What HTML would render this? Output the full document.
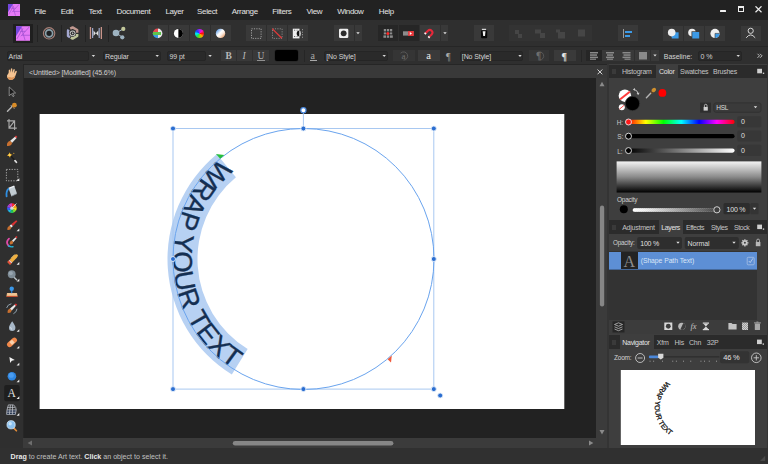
<!DOCTYPE html>
<html><head><meta charset="utf-8">
<style>
*{margin:0;padding:0;box-sizing:border-box}
html,body{width:768px;height:464px;overflow:hidden;background:#222222;font-family:"Liberation Sans",sans-serif}
.a{position:absolute}
.t{position:absolute;white-space:nowrap;font-family:"Liberation Sans",sans-serif;line-height:1}
.mn{font-size:8px;color:#e4e4e4;letter-spacing:-0.35px;top:8px}
.pt{font-size:7px;color:#c4c4c4;letter-spacing:-0.25px}
.btn{position:absolute;background:#393939}
.sep{position:absolute;width:1px;background:#232323}
.box{position:absolute;background:#262626;border-radius:2px}
</style></head><body>
<!-- menu bar -->
<div class="a" style="left:0;top:0;width:768px;height:20px;background:#222222"></div>
<!-- toolbar -->
<div class="a" style="left:0;top:19.7px;width:768px;height:26.3px;background:#2f2f2f"></div>
<div class="a" style="left:0;top:46px;width:768px;height:1px;background:#262626"></div>
<!-- context bar -->
<div class="a" style="left:0;top:47px;width:768px;height:17px;background:#2f2f2f"></div>
<div class="a" style="left:0;top:63.5px;width:768px;height:1px;background:#262626"></div>
<!-- left tools -->
<div class="a" style="left:0;top:64px;width:23px;height:384px;background:#2f2f2f"></div>
<div class="a" style="left:23px;top:64px;width:1px;height:384px;background:#262626"></div>
<!-- doc tab -->
<div class="a" style="left:24px;top:65px;width:583px;height:13px;background:#393939"></div>
<!-- canvas -->
<div class="a" style="left:24px;top:78px;width:572px;height:359.7px;background:#222222"></div>
<!-- scrollbars -->
<div class="a" style="left:596px;top:78px;width:11.3px;height:370px;background:#3b3b3b"></div>
<div class="a" style="left:23px;top:437.7px;width:574px;height:10.3px;background:#3b3b3b"></div>
<div class="a" style="left:607.3px;top:64px;width:1.6px;height:384px;background:#343434"></div>
<!-- right panel -->
<div class="a" style="left:609px;top:64px;width:159px;height:384px;background:#3e3e3e"></div>
<div class="a" style="left:766.8px;top:64px;width:1.2px;height:384px;background:#343434"></div>
<!-- status bg -->
<div class="a" style="left:0;top:448px;width:768px;height:16px;background:#303030"></div>
<!-- canvas drawing -->
<svg class="a" style="left:0;top:0" width="768" height="464" viewBox="0 0 768 464">
<rect x="39.6" y="114" width="524.7" height="295" fill="#ffffff"/>
<path d="M 216.81 154.21 A 136 136 0 0 0 231.83 374.59 L 247.64 349.09 A 106 106 0 0 1 235.93 177.33 Z" fill="#b7d1f3"/>
<path id="cp" d="M 303.5 128.5 A 130.5 130.5 0 0 0 303.5 389.5 A 130.5 130.5 0 0 0 303.5 128.5" fill="none" stroke="none"/>
<text font-family="Liberation Sans" font-size="27.4" fill="#142f52" stroke="#142f52" stroke-width="0.35"><textPath href="#cp" startOffset="90.2">WRAP YOUR TEXT</textPath></text>
<rect x="173" y="128.5" width="260.8" height="260.6" fill="none" stroke="#a8c8f1" stroke-width="1"/>
<circle cx="303.5" cy="259" r="130.5" fill="none" stroke="#6aa4ee" stroke-width="1"/>
<line x1="303.4" y1="112.5" x2="303.4" y2="128.5" stroke="#a8c8f1" stroke-width="1"/>
<circle cx="303.4" cy="110.3" r="2.6" fill="#ffffff" stroke="#4a88dc" stroke-width="1.2"/>
<g fill="#2a6dd0" stroke="#e4eefa" stroke-width="0.9">
<circle cx="173" cy="128.5" r="2.5"/><circle cx="303.4" cy="128.5" r="2.5"/><circle cx="433.8" cy="128.5" r="2.5"/>
<circle cx="173" cy="259" r="2.5"/><circle cx="433.8" cy="259" r="2.5"/>
<circle cx="173" cy="389.1" r="2.5"/><circle cx="303.4" cy="389.1" r="2.5"/><circle cx="433.8" cy="389.1" r="2.5"/>
<circle cx="440.2" cy="395.5" r="2.5"/>
</g>
<path d="M 216 154 L 224.3 155 L 220.2 158.8 Z" fill="#26bf3c"/>
<path d="M 391.8 355.6 L 387.6 359.2 L 391 362.6 Z" fill="#f05a3c"/>
</svg>
<!-- MENU -->
<svg class="a" style="left:8px;top:3.6px" width="12" height="12" viewBox="0 0 15 15"><rect width="15" height="15" fill="#e67af6"/><polygon points="0,0 6.4,0 0,10.4" fill="#7447dc"/>
<g stroke="#9e4ed0" stroke-width="0.75" fill="none"><path d="M0.9 13.1 L7.1 2.3 M5.4 1.2 L9.4 14.6 M14 0.4 L5 10.3 M6.3 9.3 L15 9.3 M4 5.3 L9.6 5.3"/></g></svg>
<div class="t mn" style="left:34.4px">File</div>
<div class="t mn" style="left:60.7px">Edit</div>
<div class="t mn" style="left:88.4px">Text</div>
<div class="t mn" style="left:116.6px">Document</div>
<div class="t mn" style="left:165.4px">Layer</div>
<div class="t mn" style="left:197.1px">Select</div>
<div class="t mn" style="left:231.8px">Arrange</div>
<div class="t mn" style="left:272.2px">Filters</div>
<div class="t mn" style="left:306.5px">View</div>
<div class="t mn" style="left:337.2px">Window</div>
<div class="t mn" style="left:378.8px">Help</div>
<div class="a" style="left:720.4px;top:10px;width:5.8px;height:2px;background:#f0f0f0;border-radius:0.5px"></div>
<div class="a" style="left:737.8px;top:6.4px;width:6px;height:5.8px;border:1px solid #eeeeee;border-top-width:2px"></div>
<svg class="a" style="left:755px;top:6px" width="7" height="6.5" viewBox="0 0 7 6.5"><path d="M0.5 0.3 L6.5 6.2 M6.5 0.3 L0.5 6.2" stroke="#eeeeee" stroke-width="1.2"/></svg>
<!-- TOOLBAR -->
<div class="a" style="left:13px;top:23.5px;width:20px;height:19px;background:#1f1f1f"></div>
<svg class="a" style="left:15.6px;top:25.9px" width="14.6" height="15" viewBox="0 0 15 15"><rect width="15" height="15" fill="#e67af6"/><polygon points="0,0 6.4,0 0,10.4" fill="#7447dc"/>
<g stroke="#9e4ed0" stroke-width="0.75" fill="none"><path d="M0.9 13.1 L7.1 2.3 M5.4 1.2 L9.4 14.6 M14 0.4 L5 10.3 M6.3 9.3 L15 9.3 M4 5.3 L9.6 5.3"/></g></svg>
<div class="sep" style="left:36.5px;top:25px;height:17px"></div>
<div class="sep" style="left:61px;top:25px;height:17px"></div>
<div class="sep" style="left:84.8px;top:25px;height:17px"></div>
<div class="sep" style="left:108.4px;top:25px;height:17px"></div>
<svg class="a" style="left:0;top:20px" width="140" height="26" viewBox="0 20 140 26">
<circle cx="49.1" cy="33.3" r="5.7" fill="none" stroke="#a88078" stroke-width="1.1"/>
<circle cx="49.1" cy="33.3" r="3.5" fill="#1e2022" stroke="#8aa0aa" stroke-width="1.7"/>
<path d="M70.2 28.6 L72.6 27.4 L77.2 30 L77.2 32.8" fill="none" stroke="#c09890" stroke-width="2.4" stroke-linejoin="round"/>
<path d="M68.6 29.6 L68 30.8 L68 36 L70 37.2" fill="none" stroke="#a4a8d0" stroke-width="2.4" stroke-linejoin="round"/>
<path d="M77.2 34 L77.2 36 L72.6 38.6 L70.8 37.6" fill="none" stroke="#bec49a" stroke-width="2.4" stroke-linejoin="round"/>
<circle cx="72.6" cy="33.3" r="2.9" fill="#c4c4c4"/><circle cx="72.6" cy="33.3" r="1.9" fill="#2c2c2c"/><path d="M72 32.2 L73.9 33.3 L72 34.4Z" fill="#bbbbbb"/>
<rect x="89.8" y="27" width="1.3" height="12" fill="#c8948a"/><rect x="100.7" y="27" width="1.3" height="12" fill="#c8948a"/>
<rect x="92" y="28" width="1.2" height="10" fill="#9ba6c8"/><rect x="98.6" y="28" width="1.2" height="10" fill="#9ba6c8"/>
<path d="M93.5 30.5 L95.9 33.3 L93.5 36 Z M98.3 30.5 L95.9 33.3 L98.3 36 Z" fill="#dedede"/>
<path d="M116 33 L123.3 28.9 M116 33 L122.3 37.1" stroke="#a7b7c4" stroke-width="1"/>
<circle cx="116" cy="33" r="3.3" fill="#9db2c0"/><circle cx="123.3" cy="28.9" r="2.1" fill="#c2c79a"/><circle cx="122.3" cy="37.3" r="2.1" fill="#9db2c0"/>
</svg>
<!-- colour group -->
<div class="btn" style="left:147.6px;top:25.2px;width:83.2px;height:15.6px"></div>
<div class="sep" style="left:168px;top:25.2px;height:15.6px;background:#2e2e2e"></div>
<div class="sep" style="left:189px;top:25.2px;height:15.6px;background:#2e2e2e"></div>
<div class="sep" style="left:210px;top:25.2px;height:15.6px;background:#2e2e2e"></div>
<svg class="a" style="left:140px;top:20px" width="100" height="26" viewBox="140 20 100 26">
<clipPath id="c1"><circle cx="157.6" cy="33.4" r="4.8"/></clipPath>
<g clip-path="url(#c1)"><rect x="152" y="28" width="6" height="5" fill="#e8484f"/><rect x="158" y="28" width="6" height="11" fill="#e6e6e6"/><rect x="152" y="33" width="6" height="6" fill="#3b9ae0"/><rect x="152" y="32" width="9" height="3" fill="#5ec34b"/></g>
<circle cx="178.4" cy="33.4" r="4.9" fill="#2a2a2a"/><circle cx="178.4" cy="33.4" r="4.5" fill="#ffffff"/><path d="M178.4 28.9 A4.5 4.5 0 0 1 178.4 37.9 Z" fill="#000000"/>
<defs><linearGradient id="g4" x1="0" y1="0" x2="1" y2="1"><stop offset="0.05" stop-color="#3a86e0"/><stop offset="0.45" stop-color="#ffffff"/><stop offset="0.6" stop-color="#fbf0e8"/><stop offset="1" stop-color="#e07e3a"/></linearGradient></defs>
<circle cx="220.5" cy="33.4" r="4.7" fill="url(#g4)"/>
</svg>
<div class="a" style="left:194.8px;top:28.7px;width:9.4px;height:9.4px;border-radius:50%;background:conic-gradient(from 0deg,#a020ff,#ff10c0 45deg,#ff1010 90deg,#ffb000 140deg,#60e010 190deg,#10e080 230deg,#00f0f0 265deg,#1040ff 310deg,#a020ff)"></div>
<!-- geometry group -->
<div class="btn" style="left:246px;top:25.3px;width:62.3px;height:15.9px"></div>
<div class="sep" style="left:266px;top:25.3px;height:15.9px;background:#2e2e2e"></div>
<div class="sep" style="left:287px;top:25.3px;height:15.9px;background:#2e2e2e"></div>
<div class="btn" style="left:333.5px;top:25.3px;width:28.3px;height:15.9px"></div>
<div class="sep" style="left:354px;top:25.3px;height:15.9px;background:#2e2e2e"></div>
<svg class="a" style="left:240px;top:20px" width="130" height="26" viewBox="240 20 130 26">
<rect x="251.5" y="28.8" width="9.6" height="9.6" fill="none" stroke="#a8a8a8" stroke-width="0.9" stroke-dasharray="1.2 1.2"/>
<rect x="272.5" y="28.8" width="9.6" height="9.6" fill="none" stroke="#8a8a8a" stroke-width="0.9" stroke-dasharray="1.2 1.2"/>
<path d="M272.2 28.6 L281.8 38.2" stroke="#e23a3a" stroke-width="1.3"/>
<rect x="292.8" y="28.7" width="6.7" height="9.7" fill="#eeeeee"/>
<g fill="#6a6a6a"><rect x="294" y="29.7" width="1.2" height="1"/><rect x="294" y="36" width="1.2" height="1"/><rect x="296.6" y="29.7" width="1" height="1"/><rect x="296.6" y="36" width="1" height="1"/></g>
<path d="M299.6 30.6 A2.9 2.9 0 0 0 299.6 36.4 Z" fill="#111"/><path d="M299.4 30.6 A1.4 2.9 0 0 1 299.4 36.4 Z" fill="#e8e8e8"/>
<g fill="#a0a0a0"><rect x="302" y="29.2" width="1" height="1"/><rect x="302" y="31.7" width="1" height="1"/><rect x="302" y="34.2" width="1" height="1"/><rect x="302" y="36.7" width="1" height="1"/></g>
<rect x="339" y="28.7" width="9.3" height="9.3" rx="1.2" fill="#eeeeee"/><circle cx="343.65" cy="33.35" r="2.9" fill="#2a2a2a"/>
<path d="M356.3 32.3 L359.7 32.3 L358 34.3 Z" fill="#e0e0e0"/>
</svg>
<!-- snapping group -->
<div class="btn" style="left:378px;top:25.3px;width:20px;height:15.9px;background:#262626"></div>
<div class="btn" style="left:398.5px;top:25.3px;width:20.4px;height:15.9px;background:#262626"></div>
<div class="btn" style="left:419.5px;top:25.3px;width:20.7px;height:15.9px;background:#3a3a3a"></div>
<div class="btn" style="left:441px;top:25.3px;width:7.3px;height:15.9px"></div>
<div class="btn" style="left:474.2px;top:25.3px;width:19.8px;height:15.9px"></div>
<svg class="a" style="left:370px;top:20px" width="130" height="26" viewBox="370 20 130 26">
<g fill="#8c8c8c"><rect x="383.8" y="29" width="2.4" height="2.4"/><rect x="387" y="29" width="2" height="2.4"/><rect x="389.8" y="29" width="2.4" height="2.4"/>
<rect x="383.8" y="32.4" width="2.4" height="2"/><rect x="389.8" y="32.4" width="2.4" height="2"/>
<rect x="383.4" y="35.4" width="2.8" height="2.4"/><rect x="387" y="35.4" width="2" height="2.4"/><rect x="389.8" y="35.4" width="3" height="2.4"/></g>
<circle cx="387.9" cy="33.4" r="1.5" fill="#ff2a2a"/>
<rect x="403" y="31.3" width="10.6" height="4.3" fill="#8c8c8c"/><rect x="408.2" y="31" width="5.6" height="5" fill="#e8363a"/><path d="M409.8 32 L412 33.5 L409.8 35Z" fill="#fff"/>
<g transform="translate(429.8 32.6) rotate(45)"><path d="M-2.6 4.2 V0 A2.6 2.6 0 0 1 2.6 0 V4.2" fill="none" stroke="#e8283a" stroke-width="2"/><path d="M-2.6 3 V4.6 M2.6 3 V4.6" stroke="#f4f4f4" stroke-width="2"/></g>
<path d="M443.3 32.3 L446.7 32.3 L445 34.3 Z" fill="#e0e0e0"/>
<rect x="481.9" y="28.8" width="4.2" height="1.1" fill="#e8e8e8"/><path d="M481 30.6 H487.2 V37 Q487.2 38.2 486 38.2 H482.2 Q481 38.2 481 37 Z" fill="#080808"/><path d="M482.7 31.2 H485.5 L485 36 H483.2 Z" fill="#f4f4f4"/>
</svg>
<!-- arrange group (disabled) -->
<div class="btn" style="left:509px;top:25.3px;width:19.7px;height:15.9px;background:#333333"></div>
<div class="btn" style="left:529.2px;top:25.3px;width:20.5px;height:15.9px;background:#333333"></div>
<div class="btn" style="left:550.2px;top:25.3px;width:20.7px;height:15.9px;background:#333333"></div>
<div class="btn" style="left:571.3px;top:25.3px;width:20.7px;height:15.9px;background:#333333"></div>
<svg class="a" style="left:500px;top:20px" width="100" height="26" viewBox="500 20 100 26">
<g fill="#464646"><rect x="515" y="30" width="4" height="4"/><rect x="518" y="34" width="4" height="4"/>
<rect x="535" y="29.5" width="6" height="4"/><rect x="540" y="33" width="5" height="5"/>
<rect x="556" y="29.5" width="4" height="3"/><rect x="558" y="32" width="7" height="6.5"/>
<rect x="578" y="29.5" width="7" height="7"/></g>
</svg>
<div class="btn" style="left:617.5px;top:25.3px;width:20.2px;height:15.9px"></div>
<div class="a" style="left:623.2px;top:28.8px;width:1px;height:9.6px;background:#9a9a9a"></div>
<div class="a" style="left:624.8px;top:30.6px;width:7.2px;height:2.2px;background:#3d9ae6"></div>
<div class="a" style="left:624.8px;top:34.6px;width:5px;height:2.2px;background:#3d9ae6"></div>
<!-- boolean group -->
<div class="btn" style="left:663.3px;top:25.5px;width:19.5px;height:15.2px"></div>
<div class="btn" style="left:683.5px;top:25.5px;width:20.4px;height:15.2px"></div>
<div class="btn" style="left:704.5px;top:25.5px;width:20.4px;height:15.2px"></div>
<div class="btn" style="left:740.7px;top:25.5px;width:20.1px;height:15.2px"></div>
<svg class="a" style="left:660px;top:20px" width="108" height="26" viewBox="660 20 108 26">
<rect x="671.7" y="32.3" width="6.9" height="6.2" fill="#3d9ae6"/><circle cx="671.7" cy="32.6" r="3.8" fill="#eeeeee"/>
<circle cx="692" cy="32.6" r="3.8" fill="#eeeeee"/><rect x="691.5" y="31.3" width="8" height="7.5" fill="#383838"/><rect x="692.3" y="32" width="6.9" height="6.5" fill="#3d9ae6"/>
<circle cx="715" cy="33.4" r="4.6" fill="#eeeeee"/><path d="M715 33.4 H719.6 A4.6 4.6 0 0 1 715 38 Z" fill="#3d9ae6"/><path d="M715 33.4 H719.6 M715 33.4 V38" stroke="#383838" stroke-width="0.6"/>
<circle cx="750.7" cy="30.8" r="2.6" fill="none" stroke="#d8d8d8" stroke-width="1"/><path d="M746.2 37.8 Q750.7 32 755.2 37.8" fill="none" stroke="#d8d8d8" stroke-width="1"/>
</svg>
<!-- CONTEXT BAR -->
<div class="box" style="left:6.8px;top:51.2px;width:82.5px;height:10px;background:#2a2a2a;border:1px solid #252525"></div>
<div class="box" style="left:89.3px;top:51.2px;width:8.2px;height:10px;background:#303030;border-radius:0 2px 2px 0"></div>
<div class="t" style="left:8.6px;top:52.9px;font-size:7px;color:#d4d4d4;letter-spacing:-0.05px">Arial</div>
<div class="box" style="left:103.3px;top:51.2px;width:57.4px;height:10px;background:#2a2a2a;border:1px solid #252525"></div>
<div class="t" style="left:105px;top:52.9px;font-size:7px;color:#d4d4d4;letter-spacing:-0.1px">Regular</div>
<div class="box" style="left:167.4px;top:51.2px;width:38.3px;height:10px;background:#2a2a2a;border:1px solid #252525"></div>
<div class="box" style="left:206px;top:51.2px;width:8.2px;height:10px;background:#303030;border-radius:0 2px 2px 0"></div>
<div class="t" style="left:169.5px;top:52.9px;font-size:7px;color:#d4d4d4;letter-spacing:-0.1px">99 pt</div>
<div class="btn" style="left:221.2px;top:50.2px;width:15px;height:11.2px"></div>
<div class="btn" style="left:236.9px;top:50.2px;width:15.4px;height:11.2px"></div>
<div class="btn" style="left:252.8px;top:50.2px;width:15.8px;height:11.2px"></div>
<div class="t" style="left:225.6px;top:51.8px;font-family:'Liberation Serif';font-size:9.5px;font-weight:bold;color:#b8b8b8">B</div>
<div class="t" style="left:242.6px;top:51.8px;font-family:'Liberation Serif';font-size:9.5px;font-style:italic;color:#b8b8b8">I</div>
<div class="t" style="left:257.4px;top:51.8px;font-family:'Liberation Serif';font-size:9.5px;color:#b8b8b8">U</div>
<div class="a" style="left:257.2px;top:59.6px;width:7.4px;height:0.9px;background:#909090"></div>
<div class="a" style="left:275px;top:50.3px;width:23px;height:10.9px;background:#000;border-radius:2px;box-shadow:0 0 0 0.5px #222"></div>
<div class="sep" style="left:303.5px;top:50px;height:12px;background:#262626"></div>
<div class="t" style="left:310.5px;top:50.5px;font-family:'Liberation Serif';font-size:10px;color:#a8a8a8">a</div>
<div class="a" style="left:309.5px;top:60px;width:7px;height:0.8px;background:#a8a8a8"></div>
<div class="box" style="left:324px;top:51.2px;width:64px;height:10px;background:#2a2a2a;border:1px solid #252525"></div>
<div class="t" style="left:326.2px;top:52.9px;font-size:7px;color:#d4d4d4;letter-spacing:-0.1px">[No Style]</div>
<div class="btn" style="left:392.9px;top:50.2px;width:21.7px;height:11px;background:#353535"></div>
<div class="t" style="left:401.5px;top:51.5px;font-family:'Liberation Serif';font-size:9px;color:#707070">a</div>
<svg class="a" style="left:398px;top:50px" width="12" height="12" viewBox="0 0 12 12"><path d="M2.6 3.2 A4.1 4.1 0 1 1 5.5 10.1" fill="none" stroke="#606060" stroke-width="0.8"/></svg>
<div class="btn" style="left:418.1px;top:50.2px;width:21.9px;height:11px;background:#3a3a3a"></div>
<div class="t" style="left:426.2px;top:51.3px;font-family:'Liberation Serif';font-size:10.5px;color:#ececec">a</div>
<div class="t" style="left:446px;top:51.5px;font-family:'Liberation Serif';font-size:10px;color:#a8a8a8">&#182;</div>
<div class="box" style="left:459.6px;top:51.2px;width:63.5px;height:10px;background:#2a2a2a;border:1px solid #252525"></div>
<div class="t" style="left:461.8px;top:52.9px;font-size:7px;color:#d4d4d4;letter-spacing:-0.1px">[No Style]</div>
<div class="btn" style="left:529px;top:50.2px;width:20.2px;height:11px;background:#353535"></div>
<svg class="a" style="left:534px;top:50px" width="12" height="12" viewBox="0 0 12 12"><path d="M2.6 3.2 A4.1 4.1 0 1 1 5.5 10.1" fill="none" stroke="#606060" stroke-width="0.8"/></svg>
<div class="t" style="left:536px;top:51.5px;font-family:'Liberation Serif';font-size:9.5px;font-weight:bold;color:#6e6e6e">&#182;</div>
<div class="btn" style="left:554.3px;top:50.2px;width:21.3px;height:11px;background:#3a3a3a"></div>
<div class="t" style="left:561.6px;top:51.5px;font-family:'Liberation Serif';font-size:10px;font-weight:bold;color:#e8e8e8">&#182;</div>
<div class="sep" style="left:580.7px;top:50px;height:12px;background:#262626"></div>
<div class="btn" style="left:586.4px;top:50.3px;width:15.3px;height:10.4px;background:#262626"></div>
<div class="btn" style="left:602.2px;top:50.3px;width:16.4px;height:10.4px"></div>
<div class="btn" style="left:619px;top:50.3px;width:15px;height:10.4px"></div>
<div class="btn" style="left:634.5px;top:50.3px;width:15.8px;height:10.4px"></div>
<div class="btn" style="left:650.7px;top:50.3px;width:8px;height:10.4px"></div>
<svg class="a" style="left:580px;top:48px" width="190" height="16" viewBox="580 48 190 16">
<g fill="#8a8a8a">
<rect x="590" y="52" width="8" height="1.5"/><rect x="590" y="54.3" width="7" height="1.5"/><rect x="590" y="56.6" width="8" height="1.5"/><rect x="590" y="58.6" width="6" height="1.2"/>
<rect x="606" y="52" width="8" height="1.5"/><rect x="607" y="54.3" width="6" height="1.5"/><rect x="606" y="56.6" width="8" height="1.5"/><rect x="607" y="58.6" width="6" height="1.2"/>
<rect x="622.5" y="52" width="8" height="1.5"/><rect x="623.5" y="54.3" width="7" height="1.5"/><rect x="622.5" y="56.6" width="8" height="1.5"/><rect x="624.5" y="58.6" width="6" height="1.2"/>
<rect x="639" y="52" width="8" height="7.5"/>
</g>
<path d="M653.3 54.5 L656.7 54.5 L655 56.5 Z" fill="#d8d8d8"/>
<path d="M94.3 0 Z" fill="none"/>
</svg>
<svg class="a" style="left:0;top:48px" width="768" height="16" viewBox="0 48 768 16">
<g fill="#d8d8d8">
<path d="M91.7 55 L95.1 55 L93.4 57 Z"/><path d="M155.5 55 L158.9 55 L157.2 57 Z"/><path d="M208.4 55 L211.8 55 L210.1 57 Z"/>
<path d="M382.5 55 L385.9 55 L384.2 57 Z"/><path d="M518.3 55 L521.7 55 L520 57 Z"/><path d="M736.5 55 L739.9 55 L738.2 57 Z"/>
</g>
<path d="M757.5 53.8 L759.5 55.8 L757.5 57.8 M760 53.8 L762 55.8 L760 57.8" fill="none" stroke="#cfcfcf" stroke-width="0.9"/>
</svg>
<div class="t" style="left:663.8px;top:52.9px;font-size:7px;color:#d4d4d4;letter-spacing:-0.05px">Baseline:</div>
<div class="box" style="left:697.5px;top:50.7px;width:44.2px;height:10.5px;background:#2a2a2a;border:1px solid #252525"></div>
<div class="t" style="left:700.5px;top:52.9px;font-size:7px;color:#d4d4d4;letter-spacing:-0.1px">0 %</div>
<svg class="a" style="left:734px;top:53px" width="8" height="6" viewBox="0 0 8 6"><path d="M2.5 2 L5.9 2 L4.2 4 Z" fill="#d8d8d8"/></svg>
<!-- TOOLS -->
<svg class="a" style="left:0;top:0" width="24" height="448" viewBox="0 0 24 448">
<g transform="translate(0 74.00)"><path d="M7 1.5 L8.6 -1 L8.8 -4 Q9.4 -5 10 -4 L10.3 -1.3 L10.9 -5.2 Q11.6 -6.2 12.3 -5.2 L12.3 -1.2 L13.4 -4.6 Q14.1 -5.4 14.8 -4.5 L14.1 -0.6 L15.6 -3 Q16.4 -3.4 16.9 -2.6 L15.4 1.8 Q14.4 5.8 11.3 6 Q8.6 6 7.2 3.5 Z" fill="#f5c391"/><path d="M10 3 Q13 4.5 15.3 1.8 Q14.4 5.8 11.3 6 Q8.6 6 7.2 3.5 Z" fill="#dc9458"/></g>
<g transform="translate(0 90.77)"><path d="M9.2 -3.8 L15.6 2.2 L12.6 2.4 L14.2 5.2 L13 5.9 L11.4 3 L9.2 5 Z" fill="#1a1a1a" stroke="#a0a0a0" stroke-width="0.8" stroke-linejoin="round"/></g>
<g transform="translate(0 107.54)"><path d="M7.5 3.7 L12.2 -1" stroke="#b4b4b4" stroke-width="1.5" stroke-linecap="round"/><path d="M11 -2.2 L14.2 1" stroke="#d8d8d8" stroke-width="1"/><circle cx="14.4" cy="-2.4" r="2.4" fill="#d88c28"/><path d="M12.2 -0.6 L13.4 0.6" stroke="#6d4210" stroke-width="1.2"/></g>
<g transform="translate(0 124.31)"><path d="M9 -5.2 V3.8 H16.8 M7 -3.4 H14.6 V5.6 M9.2 3.6 L14.4 -3.2" fill="none" stroke="#ababab" stroke-width="1.1"/></g>
<g transform="translate(0 141.08)"><path d="M7 4.8 Q6.4 0.8 10.2 -0.4 L12.2 1.6 Q11.2 5.4 7 4.8 Z" fill="#c87030"/><path d="M10.2 -0.4 L15.2 -4.6 L16.6 -3.2 L12.2 1.6 Z" fill="#e8e8e8"/><path d="M14.8 -4.4 L16 -5.6 L17.4 -4.2 L16.2 -3 Z" fill="#e23a3a"/></g>
<g transform="translate(0 157.85)"><path d="M10.6 -2.2 L15.6 3.4" stroke="#1c1c1c" stroke-width="1.5"/><path d="M15 2.8 L16.4 4.4" stroke="#dcdcdc" stroke-width="1.8" stroke-linecap="round"/><path d="M9.6 -5.6 L10.5 -3.6 L12.6 -3 L10.6 -2 L10 0 L9 -1.8 L6.8 -2.4 L8.6 -3.4 Z" fill="#f2a81c"/><circle cx="9.6" cy="-2.8" r="1.2" fill="#ffd860"/><circle cx="13.8" cy="-4.6" r="0.6" fill="#f0b030"/></g>
<g transform="translate(0 174.62)"><rect x="6.4" y="-5.2" width="11.4" height="11.4" fill="none" stroke="#b0b0b0" stroke-width="0.9" stroke-dasharray="1.3 1.3"/></g>
<g transform="translate(0 174.62)"><path d="M19.3 3.6 L19.3 6.3 L16.6 6.3 Z" fill="#ececec"/></g>
<g transform="translate(0 191.39)"><path d="M8.6 -3 L14.4 -5.2 L17 2.2 L11.4 4.8 Z" fill="#c2ccd2"/><path d="M8.6 -3 L14.4 -5.2" stroke="#eef2f6" stroke-width="1.4"/><path d="M11.4 4.8 L17 2.2" stroke="#8a969e" stroke-width="0.8"/><path d="M8.4 -2.4 Q6 -0.5 6.6 5" fill="none" stroke="#2f8ee0" stroke-width="1.8" stroke-linecap="round"/></g>
<g transform="translate(0 208.16)"><path d="M11.9 0 L11.90 -4.80 A4.8 4.8 0 0 1 15.05 -3.62 Z" fill="#ff3030"/><path d="M11.9 0 L14.99 -3.68 A4.8 4.8 0 0 1 16.64 -0.75 Z" fill="#ff9a20"/><path d="M11.9 0 L16.63 -0.83 A4.8 4.8 0 0 1 16.01 2.47 Z" fill="#ffe020"/><path d="M11.9 0 L16.06 2.40 A4.8 4.8 0 0 1 13.46 4.54 Z" fill="#80e030"/><path d="M11.9 0 L13.54 4.51 A4.8 4.8 0 0 1 10.18 4.48 Z" fill="#20c060"/><path d="M11.9 0 L10.26 4.51 A4.8 4.8 0 0 1 7.70 2.33 Z" fill="#20b8e0"/><path d="M11.9 0 L7.74 2.40 A4.8 4.8 0 0 1 7.19 -0.92 Z" fill="#3060ff"/><path d="M11.9 0 L7.17 -0.83 A4.8 4.8 0 0 1 8.88 -3.73 Z" fill="#a040e0"/><path d="M11.9 0 L8.81 -3.68 A4.8 4.8 0 0 1 11.98 -4.80 Z" fill="#e040c0"/><circle cx="11.9" cy="0" r="1.6" fill="#d8d8d8"/><path d="M11.9 0 L16.4 -4.6" stroke="#e0e0e0" stroke-width="0.9"/></g>
<g transform="translate(0 224.93)"><path d="M7.4 5 Q7 1.8 9.6 0.8 L11.4 2.6 Q10.6 5.6 7.4 5 Z" fill="#c87030"/><path d="M9.6 0.8 L11.2 -0.8 L13 1 L11.4 2.6 Z" fill="#e8e8e8"/><path d="M11.2 -0.8 L16.2 -4.8 L17.4 -3.6 L13 1 Z" fill="#d83232"/></g>
<g transform="translate(0 224.93)"><path d="M19.3 3.6 L19.3 6.3 L16.6 6.3 Z" fill="#ececec"/></g>
<g transform="translate(0 241.70)"><path d="M9 -3 Q5.2 0.5 8.6 4.2" fill="none" stroke="#e04aa8" stroke-width="1.8" stroke-linecap="round"/><path d="M8.6 4.2 Q10.5 5.5 13 5" fill="none" stroke="#22b4d8" stroke-width="1.4" stroke-linecap="round"/><path d="M9.8 2.6 Q9.4 -0.4 12 -1.2 L13.4 0.2 Q12.8 3.2 9.8 2.6 Z" fill="#c87030"/><path d="M12 -1.2 L15.6 -4.4 L16.6 -3.4 L13.4 0.2 Z" fill="#e8e8e8"/><path d="M15.2 -4.6 L16.4 -5.8 L17.6 -4.6 L16.4 -3.4 Z" fill="#e03030"/></g>
<g transform="translate(0 258.47)"><path d="M7.4 3.6 L14.2 -3.2 Q16.6 -5 17.6 -3.8 Q18.4 -2.6 16.8 -0.6 L10 6.2 Z" fill="#f0b040"/><path d="M7.4 3.6 L9.6 1.4 L12.2 4 L10 6.2 Z" fill="#e84838"/><path d="M9.2 1.8 L11.8 4.4" stroke="#d4d4d4" stroke-width="1.1"/><path d="M11 -0.2 L14.8 -4" stroke="#f8d888" stroke-width="0.8"/></g>
<g transform="translate(0 258.47)"><path d="M19.3 3.6 L19.3 6.3 L16.6 6.3 Z" fill="#ececec"/></g>
<g transform="translate(0 275.24)"><path d="M14 2 L16.6 4.6" stroke="#b8c0c4" stroke-width="1.4" stroke-linecap="round"/><circle cx="11.7" cy="-1" r="3.9" fill="#7e8c96"/><circle cx="10.8" cy="-2" r="2" fill="#98a6b0"/></g>
<g transform="translate(0 275.24)"><path d="M19.3 3.6 L19.3 6.3 L16.6 6.3 Z" fill="#ececec"/></g>
<g transform="translate(0 292.01)"><path d="M7 1 H17 L17.6 4.2 H6.4 Z" fill="#eab47c"/><rect x="6.4" y="4" width="11.2" height="0.9" fill="#d05030"/><path d="M7.5 2 H16.5" stroke="#f8e2c4" stroke-width="0.7"/><rect x="11.1" y="-2" width="1.2" height="3.2" fill="#2c84d8"/><circle cx="11.7" cy="-3.2" r="2.2" fill="#3a98ea"/></g>
<g transform="translate(0 308.78)"><path d="M7.6 4 Q7.2 0.8 10 -0.2 L11.8 1.6 Q11 4.6 7.6 4 Z" fill="#c87030"/><path d="M10 -0.2 L14.8 -4.2 L16 -3 L11.8 1.6 Z" fill="#e8e8e8"/><path d="M14.6 -4.2 L15.8 -5.4 L17.2 -4 L16 -2.8 Z" fill="#e03030"/><path d="M6.6 -0.8 Q7.6 -4.4 11.4 -5" fill="none" stroke="#8fa0ac" stroke-width="1"/><path d="M17 0 Q16.6 3.6 13.4 5" fill="none" stroke="#8fa0ac" stroke-width="1"/></g>
<g transform="translate(0 325.55)"><path d="M12.2 -4.2 Q15.6 0.4 15.4 2.2 A3.2 3.2 0 0 1 9 2.2 Q8.8 0.4 12.2 -4.2 Z" fill="#a6b6c6"/><path d="M10.6 1.6 Q10.6 3.4 12 3.8" fill="none" stroke="#e4ecf4" stroke-width="0.8"/></g>
<g transform="translate(0 325.55)"><path d="M19.3 3.6 L19.3 6.3 L16.6 6.3 Z" fill="#ececec"/></g>
<g transform="translate(0 342.32)"><g transform="rotate(-42 12 0)"><rect x="6.2" y="-2.6" width="11.6" height="5.2" rx="2.6" fill="#f0884a"/><rect x="10.2" y="-2" width="3.6" height="4" fill="#f8d2ae"/></g></g>
<g transform="translate(0 342.32)"><path d="M19.3 3.6 L19.3 6.3 L16.6 6.3 Z" fill="#ececec"/></g>
<g transform="translate(0 359.09)"><path d="M9.4 -2.2 L14.8 1 L11.8 1.6 L10.2 4 Z" fill="#f2f2f2"/></g>
<g transform="translate(0 359.09)"><path d="M19.3 3.6 L19.3 6.3 L16.6 6.3 Z" fill="#ececec"/></g>
<g transform="translate(0 375.86)"><circle cx="11.9" cy="0.4" r="4.3" fill="#2f86e0"/><circle cx="11.2" cy="-0.6" r="2.6" fill="#4a9cf0"/></g>
<g transform="translate(0 375.86)"><path d="M19.3 3.6 L19.3 6.3 L16.6 6.3 Z" fill="#ececec"/></g>
<g transform="translate(0 392.63)"><rect x="4.2" y="-7.7" width="15.5" height="16.2" rx="2" fill="#1e1e1e"/><text x="11.7" y="4.8" text-anchor="middle" font-family="Liberation Serif" font-size="11.5" fill="#e2e2e2">A</text></g>
<g transform="translate(0 392.63)"><path d="M19.3 3.6 L19.3 6.3 L16.6 6.3 Z" fill="#ececec"/></g>
<g transform="translate(0 409.40)"><path d="M7 0.5 L16.2 0.5 L15.4 5 L6.6 5 Z" fill="#1e2d48"/><path d="M8.4 -4.5 L13.6 -4.5 Q16.4 -2 16.2 0.5 L15.4 5 L6.6 5 L7 0.5 Z M7.3 -2 H15 M7 0.5 H16.2 M6.8 2.8 H15.8 M10.4 -4.5 L9.4 5 M12.6 -4.5 L12.4 5" fill="none" stroke="#c0c4cc" stroke-width="0.75"/></g>
<g transform="translate(0 409.40)"><path d="M19.3 3.6 L19.3 6.3 L16.6 6.3 Z" fill="#ececec"/></g>
<g transform="translate(0 426.17)"><path d="M13.8 2 L16.4 4.6" stroke="#e08a38" stroke-width="1.7" stroke-linecap="round"/><circle cx="11.1" cy="-1.4" r="4.1" fill="#8cc2f0" stroke="#d8ecfc" stroke-width="0.8"/><circle cx="10.2" cy="-2.4" r="1.7" fill="#c8e4fa"/></g>
</svg>
<!-- DOC TAB / SCROLL -->
<div class="t" style="left:29px;top:68.6px;font-size:7px;color:#d0d0d0;letter-spacing:-0.13px">&lt;Untitled&gt; [Modified] (45.6%)</div>
<svg class="a" style="left:596.8px;top:68.6px" width="6" height="6" viewBox="0 0 6 6"><path d="M0.5 0.5 L5.3 5.3 M5.3 0.5 L0.5 5.3" stroke="#d8d8d8" stroke-width="1"/></svg>
<svg class="a" style="left:0;top:0" width="768" height="464" viewBox="0 0 768 464">
<path d="M599.5 86.2 L604.5 86.2 L602 81.8 Z" fill="#8a8a8a"/>
<path d="M599.5 430 L604.5 430 L602 434.4 Z" fill="#8a8a8a"/>
<path d="M32 440.5 L32 445.5 L27.6 443 Z" fill="#6e6e6e"/>
<path d="M589 440.5 L589 445.5 L593.4 443 Z" fill="#8a8a8a"/>
<rect x="232.8" y="441" width="160.6" height="4.6" rx="2.3" fill="#868686"/>
<rect x="599.9" y="205.6" width="4.3" height="101" rx="2.1" fill="#868686"/>
</svg>
<!-- STATUS -->
<div class="t" style="left:10.6px;top:453.9px;font-size:7.1px;color:#e8e8e8"><b>Drag</b><span style="color:#c0c0c0"> to create Art text. </span><b>Click</b><span style="color:#c0c0c0"> an object to select it.</span></div>
<!-- RIGHT PANEL -->
<div class="a" style="left:609px;top:64.5px;width:157.8px;height:13.5px;background:#2b2b2b"></div>
<div class="a" style="left:656px;top:64.5px;width:22px;height:13.5px;background:#3e3e3e"></div>
<div class="a" style="left:609px;top:220.3px;width:157.8px;height:13.5px;background:#2b2b2b"></div>
<div class="a" style="left:659.3px;top:220.3px;width:23.7px;height:13.5px;background:#3e3e3e"></div>
<div class="a" style="left:609px;top:335.3px;width:157.8px;height:13.5px;background:#2b2b2b"></div>
<div class="a" style="left:619.5px;top:335.3px;width:34.8px;height:13.5px;background:#3e3e3e"></div>
<svg class="a" style="left:0;top:0" width="768" height="464" viewBox="0 0 768 464">
<g fill="#4a4a4a"><rect x="612.5" y="69" width="1" height="5"/><rect x="614.5" y="69" width="1" height="5"/>
<rect x="612.5" y="225" width="1" height="5"/><rect x="614.5" y="225" width="1" height="5"/>
<rect x="612.5" y="340" width="1" height="5"/><rect x="614.5" y="340" width="1" height="5"/></g>
<g fill="#cfcfcf"><rect x="757.2" y="68.8" width="4.8" height="4.5"/><rect x="762.8" y="72.6" width="1.4" height="1.4"/>
<rect x="757.2" y="224.6" width="4.8" height="4.5"/><rect x="762.8" y="228.4" width="1.4" height="1.4"/>
<rect x="757" y="339.6" width="4.8" height="4.5"/><rect x="762.6" y="343.4" width="1.4" height="1.4"/></g>
</svg>
<div class="t pt" style="left:622px;top:67.9px">Histogram</div>
<div class="t pt" style="left:659px;top:67.9px;color:#e4e4e4">Color</div>
<div class="t pt" style="left:680px;top:67.9px">Swatches</div>
<div class="t pt" style="left:713px;top:67.9px">Brushes</div>
<div class="t pt" style="left:622.2px;top:223.8px">Adjustment</div>
<div class="t pt" style="left:661.3px;top:223.8px;color:#e4e4e4;letter-spacing:-0.4px">Layers</div>
<div class="t pt" style="left:686px;top:223.8px;letter-spacing:-0.45px">Effects</div>
<div class="t pt" style="left:711px;top:223.8px;letter-spacing:-0.4px">Styles</div>
<div class="t pt" style="left:734px;top:223.8px;letter-spacing:-0.45px">Stock</div>
<div class="t pt" style="left:622.3px;top:338.8px;color:#e4e4e4;letter-spacing:-0.3px">Navigator</div>
<div class="t pt" style="left:656.8px;top:338.8px;letter-spacing:-0.2px">Xfm</div>
<div class="t pt" style="left:674.5px;top:338.8px;letter-spacing:-0.2px">His</div>
<div class="t pt" style="left:689px;top:338.8px;letter-spacing:-0.2px">Chn</div>
<div class="t pt" style="left:706.8px;top:338.8px;letter-spacing:-0.3px">32P</div>
<!-- colour panel -->
<svg class="a" style="left:0;top:0" width="768" height="464" viewBox="0 0 768 464">
<defs>
<clipPath id="wc"><circle cx="624.9" cy="95.7" r="6.25"/></clipPath>
<clipPath id="sc"><circle cx="621.8" cy="107.2" r="3"/></clipPath>
<linearGradient id="hue" x1="0" x2="1"><stop offset="0" stop-color="#ff0000"/><stop offset="0.167" stop-color="#ffff00"/><stop offset="0.333" stop-color="#00ff00"/><stop offset="0.5" stop-color="#00ffff"/><stop offset="0.667" stop-color="#0000ff"/><stop offset="0.833" stop-color="#ff00ff"/><stop offset="1" stop-color="#ff0000"/></linearGradient>
<linearGradient id="lum" x1="0" x2="1"><stop offset="0" stop-color="#000000"/><stop offset="1" stop-color="#ffffff"/></linearGradient>
<linearGradient id="vg" x1="0" y1="0" x2="0" y2="1"><stop offset="0" stop-color="#f4f4f4"/><stop offset="0.5" stop-color="#8a8a8a"/><stop offset="1" stop-color="#000000"/></linearGradient>
<linearGradient id="opg" x1="0" x2="1"><stop offset="0" stop-color="#ffffff"/><stop offset="0.15" stop-color="#ffffff" stop-opacity="0.8"/><stop offset="1" stop-color="#3a3a3a" stop-opacity="0.85"/></linearGradient>
<pattern id="chk" width="2" height="2" patternUnits="userSpaceOnUse"><rect width="2" height="2" fill="#9a9a9a"/><rect width="1" height="1" fill="#d0d0d0"/><rect x="1" y="1" width="1" height="1" fill="#d0d0d0"/></pattern>
</defs>
<circle cx="624.9" cy="95.7" r="6.25" fill="#ffffff"/>
<path d="M618 101 L632 90" stroke="#ff3b3b" stroke-width="1.9" clip-path="url(#wc)"/>
<circle cx="621.8" cy="107.2" r="3" fill="#ffffff"/>
<path d="M618.5 110 L625 104.5" stroke="#ff5050" stroke-width="1" clip-path="url(#sc)"/>
<circle cx="632.5" cy="103.5" r="7.2" fill="#000000" stroke="#343434" stroke-width="0.8"/>
<path d="M634.4 89.6 Q637.2 90.2 638 93.2" fill="none" stroke="#c4c4c4" stroke-width="1"/>
<path d="M635 88 L632.8 89.4 L635 90.8 Z M636.6 93 L638.2 95.2 L639.6 92.8 Z" fill="#c8c8c8"/>
<path d="M646.4 97.8 L651.4 92.6" stroke="#b4b4b4" stroke-width="1.4" stroke-linecap="round"/>
<path d="M650.6 91.6 L652.6 93.6" stroke="#6a4416" stroke-width="1.2"/>
<ellipse cx="653.8" cy="90" rx="2.5" ry="1.9" transform="rotate(-40 653.8 90)" fill="#d0902e"/>
<circle cx="662.4" cy="92.9" r="3.9" fill="#ff0000"/>
<rect x="700.1" y="102.6" width="10.9" height="10" fill="#2e2e2e"/>
<rect x="703.6" y="107" width="4.2" height="3.6" fill="#cfcfcf"/><path d="M704.4 107 V105.6 A1.3 1.3 0 0 1 707 105.6 V107" fill="none" stroke="#cfcfcf" stroke-width="0.8"/>
<rect x="713.8" y="102.9" width="47.2" height="9.3" rx="2" fill="#3a3a3a" stroke="#313131" stroke-width="1"/>
<path d="M753.8 106.2 L757.2 106.2 L755.5 108.2 Z" fill="#e0e0e0"/>
<rect x="628" y="119.8" width="106.6" height="4.3" rx="2.15" fill="url(#hue)"/>
<rect x="628" y="134" width="106.6" height="4.3" rx="2.15" fill="#000000"/>
<rect x="628" y="148.4" width="106.6" height="4.3" rx="2.15" fill="url(#lum)"/>
<circle cx="628.5" cy="122" r="3" fill="#ff1a1a" stroke="#e8e8e8" stroke-width="0.9"/>
<circle cx="628.5" cy="136.2" r="3" fill="#000000" stroke="#e8e8e8" stroke-width="0.9"/>
<circle cx="628.5" cy="150.6" r="3" fill="#000000" stroke="#e8e8e8" stroke-width="0.9"/>
<rect x="737.3" y="116.3" width="24.1" height="10.9" rx="1.5" fill="#373737"/>
<rect x="737.3" y="130.4" width="24.1" height="11.1" rx="1.5" fill="#373737"/>
<rect x="737.3" y="144.8" width="24.1" height="11.1" rx="1.5" fill="#373737"/>
<rect x="616.6" y="161.4" width="144.8" height="31.1" fill="url(#vg)"/>
<circle cx="623.8" cy="209.3" r="4" fill="#000000"/>
<path d="M634.5 208.2 H715 V211.8 H634.5 A1.8 1.8 0 0 1 634.5 208.2 Z" fill="url(#chk)"/>
<path d="M634.5 208.2 H715 V211.8 H634.5 A1.8 1.8 0 0 1 634.5 208.2 Z" fill="url(#opg)"/>
<circle cx="716.9" cy="209.8" r="3.1" fill="#3e3e3e" stroke="#e0e0e0" stroke-width="0.9"/>
<rect x="723.5" y="203" width="26.3" height="11.3" rx="1.5" fill="#2d2d2d"/>
<rect x="750.3" y="203" width="8.3" height="11.3" rx="1.5" fill="#343434"/>
<path d="M752.8 207.8 L756.2 207.8 L754.5 209.8 Z" fill="#e0e0e0"/>
</svg>
<div class="t" style="left:716.3px;top:105px;font-size:6.5px;color:#dcdcdc;letter-spacing:-0.35px">HSL</div>
<div class="t" style="left:616.8px;top:120px;font-size:6.5px;color:#c8c8c8;letter-spacing:-0.2px">H:</div>
<div class="t" style="left:617.3px;top:134.2px;font-size:6.5px;color:#c8c8c8;letter-spacing:-0.2px">S:</div>
<div class="t" style="left:617.3px;top:148.6px;font-size:6.5px;color:#c8c8c8;letter-spacing:-0.2px">L:</div>
<div class="t" style="left:741px;top:118.2px;font-size:7px;color:#e0e0e0">0</div>
<div class="t" style="left:741px;top:132.4px;font-size:7px;color:#e0e0e0">0</div>
<div class="t" style="left:741px;top:146.8px;font-size:7px;color:#e0e0e0">0</div>
<div class="t" style="left:617px;top:196.5px;font-size:6.5px;color:#d0d0d0;letter-spacing:-0.25px">Opacity</div>
<div class="t" style="left:726.5px;top:205.5px;font-size:7px;color:#e0e0e0;letter-spacing:-0.2px">100 %</div>
<!-- layers panel -->
<div class="a" style="left:609px;top:250.5px;width:148px;height:69.5px;background:#333333"></div>
<div class="a" style="left:608.5px;top:251.7px;width:148.5px;height:18.3px;background:#5d8fd5;border-bottom:1px solid #46699a"></div>
<div class="a" style="left:620.9px;top:252.2px;width:17.3px;height:16.6px;background:#232323"></div>
<div class="t" style="left:623.6px;top:253.6px;font-family:'Liberation Serif';font-size:16px;color:#8c8c8c">A</div>
<div class="t" style="left:640.7px;top:257.5px;font-size:6.8px;color:#dbe6f6;letter-spacing:-0.05px">(Shape Path Text)</div>
<svg class="a" style="left:746px;top:256px" width="10" height="10" viewBox="0 0 10 10"><rect x="1.2" y="1.3" width="7" height="7.5" rx="1" fill="none" stroke="#a8c0e4" stroke-width="0.8"/><path d="M2.8 5 L4.2 6.6 L7 2.3" fill="none" stroke="#c8d8f0" stroke-width="0.8"/></svg>
<div class="a" style="left:609px;top:320px;width:157.8px;height:13.8px;background:#3c3c3c"></div>
<div class="t" style="left:613px;top:240.3px;font-size:6.3px;color:#d0d0d0;letter-spacing:-0.2px">Opacity:</div>
<svg class="a" style="left:0;top:0" width="768" height="464" viewBox="0 0 768 464">
<rect x="637.2" y="237.1" width="44.8" height="11.9" rx="2" fill="#2e2e2e"/>
<rect x="684.7" y="237.1" width="54.1" height="11.9" rx="2" fill="#2e2e2e"/>
<path d="M676.3 241.8 L679.7 241.8 L678 243.8 Z M732.3 241.8 L735.7 241.8 L734 243.8 Z" fill="#e0e0e0"/>
<g transform="translate(744.9 242.8)" fill="#c8c8c8"><circle r="2.6"/><g stroke="#c8c8c8" stroke-width="1.3"><path d="M0 -3.6 V3.6 M-3.6 0 H3.6 M-2.5 -2.5 L2.5 2.5 M2.5 -2.5 L-2.5 2.5"/></g><circle r="1" fill="#3e3e3e"/></g>
<rect x="755.8" y="242" width="4.6" height="4.2" fill="#b8b8b8"/><path d="M756.7 242 V240.5 A1.4 1.4 0 0 1 759.5 240.5 V242" fill="none" stroke="#b8b8b8" stroke-width="0.9"/>
<rect x="612.5" y="321.3" width="12" height="11.2" fill="#262626"/>
<path d="M614.5 324.5 L618.5 322.8 L622.5 324.5 L618.5 326.2 Z M614.5 326.8 L618.5 328.5 L622.5 326.8 M614.5 329 L618.5 330.7 L622.5 329" fill="none" stroke="#bcbcbc" stroke-width="0.8"/>
<rect x="664.3" y="322.5" width="8" height="7.5" fill="#d8d8d8"/><circle cx="668.3" cy="326.25" r="2.4" fill="#3c3c3c"/>
<circle cx="681.8" cy="326.3" r="3.6" fill="#b8b8b8"/><path d="M681.8 322.7 A3.6 3.6 0 0 1 681.8 329.9 Z" fill="#3c3c3c" transform="rotate(25 681.8 326.3)"/>
<rect x="702.8" y="322.5" width="6.2" height="1.2" fill="#d8d8d8"/><rect x="702.8" y="329" width="6.2" height="1.2" fill="#d8d8d8"/><path d="M703.5 323.7 L708.3 323.7 L705.9 326.4 Z M703.5 329 L708.3 329 L705.9 326.4 Z" fill="#d8d8d8"/>
<path d="M728.4 323 H731.5 L732.5 324 H736.6 V329.6 H728.4 Z" fill="#c4c4c4"/>
<rect x="742" y="322.5" width="6" height="7.5" fill="url(#chk)"/>
<rect x="754.8" y="323.5" width="5.2" height="6.5" rx="0.6" fill="#a8a8a8"/><rect x="754" y="322.4" width="6.8" height="1" fill="#a8a8a8"/><rect x="756.4" y="321.6" width="2" height="0.9" fill="#a8a8a8"/>
</svg>
<div class="t" style="left:640.2px;top:240px;font-size:7px;color:#e0e0e0;letter-spacing:-0.2px">100 %</div>
<div class="t" style="left:687.5px;top:240px;font-size:7px;color:#dcdcdc;letter-spacing:-0.1px">Normal</div>
<div class="t" style="left:690.5px;top:321.8px;font-family:'Liberation Serif';font-style:italic;font-size:8.5px;color:#c4c4c4">fx</div>
<!-- navigator -->
<div class="t" style="left:614px;top:355px;font-size:6.5px;color:#d4d4d4;letter-spacing:-0.2px">Zoom:</div>
<svg class="a" style="left:0;top:0" width="768" height="464" viewBox="0 0 768 464">
<circle cx="640.1" cy="358" r="4.5" fill="none" stroke="#c8c8c8" stroke-width="0.9"/><path d="M637.6 358 H642.6" stroke="#c8c8c8" stroke-width="0.9"/>
<circle cx="756.3" cy="357.8" r="4.8" fill="none" stroke="#c8c8c8" stroke-width="0.9"/><path d="M753.6 357.8 H759 M756.3 355.1 V360.5" stroke="#c8c8c8" stroke-width="0.9"/>
<rect x="648.8" y="356.3" width="70.6" height="1.2" fill="#2c2c2c"/>
<rect x="648.8" y="355.6" width="10" height="2.6" rx="1.3" fill="#4a86d8"/>
<path d="M658.1 353.8 H663.4 V357.8 L660.75 359.4 L658.1 357.8 Z" fill="#d8d8d8"/>
<g fill="#8e8e8e"><rect x="649.6" y="360.6" width="0.9" height="1.3"/><rect x="653.2" y="360.6" width="0.9" height="1.3"/><rect x="662.1" y="360.6" width="0.9" height="1.3"/><rect x="672.3" y="360.6" width="0.9" height="1.3"/><rect x="675.9" y="360.6" width="0.9" height="1.3"/><rect x="683.1" y="360.6" width="0.9" height="1.3"/><rect x="690.3" y="360.6" width="0.9" height="1.3"/><rect x="700.5" y="360.6" width="0.9" height="1.3"/><rect x="704.1" y="360.6" width="0.9" height="1.3"/><rect x="708.8" y="360.6" width="0.9" height="1.3"/><rect x="716" y="360.6" width="0.9" height="1.3"/></g>
<rect x="720" y="351.3" width="29.3" height="11.9" rx="2" fill="#333333"/>
<rect x="620.8" y="370" width="134.2" height="75" fill="#ffffff"/>
<path id="np" d="M 688.3 373.8 A 33.4 33.4 0 0 0 688.3 440.6 A 33.4 33.4 0 0 0 688.3 373.8" fill="none"/>
<text font-family="Liberation Sans" font-size="7" fill="#1a1a1a" stroke="#1a1a1a" stroke-width="0.3"><textPath href="#np" startOffset="23.06">WRAP YOUR TEXT</textPath></text>
<path d="M760 461 L765.2 455.8 L765.2 461 Z" fill="#484848"/>
</svg>
<div class="t" style="left:723.3px;top:353.7px;font-size:7.5px;color:#e0e0e0;letter-spacing:-0.2px">46 %</div>
<!-- END -->
</body></html>
